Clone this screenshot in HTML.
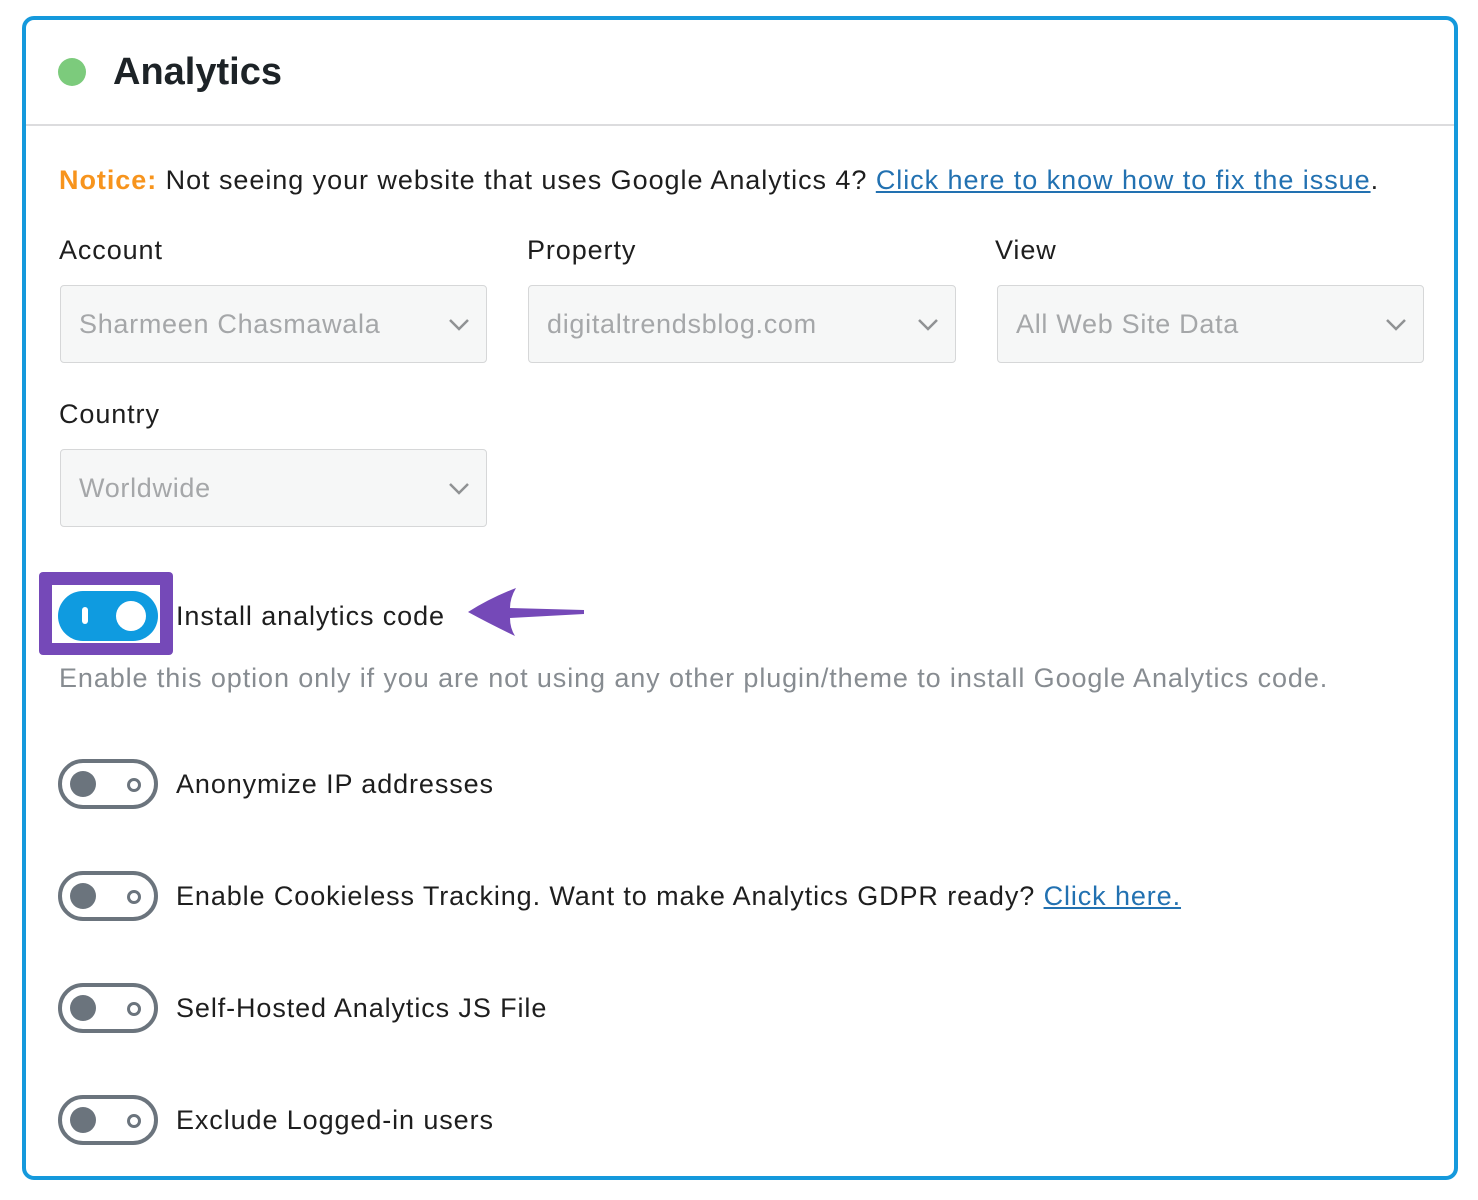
<!DOCTYPE html>
<html><head><meta charset="utf-8"><style>
body{margin:0;width:1478px;height:1200px;background:#fff;font-family:"Liberation Sans",sans-serif;position:relative;overflow:hidden;color:#1e1e1e}
.card{position:absolute;left:22px;top:16px;width:1428px;height:1156px;border:4px solid #1599dc;border-radius:12px}
.a{position:absolute;white-space:nowrap}
.t{font-size:27px;line-height:30px;letter-spacing:0.9px}
.sel{position:absolute;height:78px;background:#f6f7f7;border:1.5px solid #d6d7d8;border-radius:4px;box-sizing:border-box;color:#a5a7a9;font-size:27px;letter-spacing:0.7px;line-height:76px;padding-left:18px}
.sel svg{position:absolute;right:16px;top:32px}
.tg{position:absolute;left:58px;width:100px;height:50px;box-sizing:border-box;border:4px solid #6b747d;border-radius:25px}
.tg .k{position:absolute;left:8px;top:8px;width:26px;height:26px;border-radius:50%;background:#6b747d}
.tg .o{position:absolute;left:65px;top:15px;width:8px;height:8px;border:3px solid #6b747d;border-radius:50%}
a{color:#2271b1;text-decoration:underline}
</style></head><body>
<div class="card"></div>
<div class="a" style="left:58px;top:58px;width:28px;height:28px;border-radius:50%;background:#7ccb7c"></div>
<div class="a" style="left:113px;top:48px;font-size:38px;line-height:48px;font-weight:bold;color:#1d2327">Analytics</div>
<div class="a" style="left:26px;top:124px;width:1428px;height:2px;background:#dcdcde"></div>
<div class="a t" style="left:59px;top:165px;letter-spacing:0.95px"><b style="color:#f7941d">Notice:</b> Not seeing your website that uses Google Analytics 4? <a>Click here to know how to fix the issue</a>.</div>
<div class="a t" style="left:59px;top:235px">Account</div>
<div class="a t" style="left:527px;top:235px">Property</div>
<div class="a t" style="left:995px;top:235px">View</div>
<div class="sel" style="left:60px;top:285px;width:427px">Sharmeen Chasmawala<svg width="22" height="14"><path d="M2 2l9 9 9-9" fill="none" stroke="#909294" stroke-width="2.5"/></svg></div>
<div class="sel" style="left:528px;top:285px;width:428px">digitaltrendsblog.com<svg width="22" height="14"><path d="M2 2l9 9 9-9" fill="none" stroke="#909294" stroke-width="2.5"/></svg></div>
<div class="sel" style="left:997px;top:285px;width:427px">All Web Site Data<svg width="22" height="14"><path d="M2 2l9 9 9-9" fill="none" stroke="#909294" stroke-width="2.5"/></svg></div>
<div class="a t" style="left:59px;top:399px">Country</div>
<div class="sel" style="left:60px;top:449px;width:427px">Worldwide<svg width="22" height="14"><path d="M2 2l9 9 9-9" fill="none" stroke="#909294" stroke-width="2.5"/></svg></div>
<div class="a" style="left:39px;top:572px;width:134px;height:83px;background:#7549b8;border-radius:4px"></div>
<div class="a" style="left:52px;top:585px;width:108px;height:58px;background:#fff"></div>
<div class="a" style="left:58px;top:591px;width:100px;height:50px;border-radius:25px;background:#0f9be0"></div>
<div class="a" style="left:82px;top:607px;width:6px;height:17px;border-radius:3px;background:#fff"></div>
<div class="a" style="left:116px;top:601px;width:30px;height:30px;border-radius:50%;background:#fff"></div>
<div class="a t" style="left:176px;top:601px">Install analytics code</div>
<svg class="a" style="left:460px;top:580px" width="130" height="60"><path d="M8 32 Q30 18 56 8 Q50 18 50 28 L124 30 L124 34 L50 38 Q50 48 55 56 Q30 44 8 32 Z" fill="#7549b8"/></svg>
<div class="a t" style="left:59px;top:663px;color:#878c91">Enable this option only if you are not using any other plugin/theme to install Google Analytics code.</div>
<div class="tg" style="top:759px"><div class="k"></div><div class="o"></div></div>
<div class="a t" style="left:176px;top:769px">Anonymize IP addresses</div>
<div class="tg" style="top:871px"><div class="k"></div><div class="o"></div></div>
<div class="a t" style="left:176px;top:881px">Enable Cookieless Tracking. Want to make Analytics GDPR ready? <a>Click here.</a></div>
<div class="tg" style="top:983px"><div class="k"></div><div class="o"></div></div>
<div class="a t" style="left:176px;top:993px">Self-Hosted Analytics JS File</div>
<div class="tg" style="top:1095px"><div class="k"></div><div class="o"></div></div>
<div class="a t" style="left:176px;top:1105px">Exclude Logged-in users</div>
</body></html>
